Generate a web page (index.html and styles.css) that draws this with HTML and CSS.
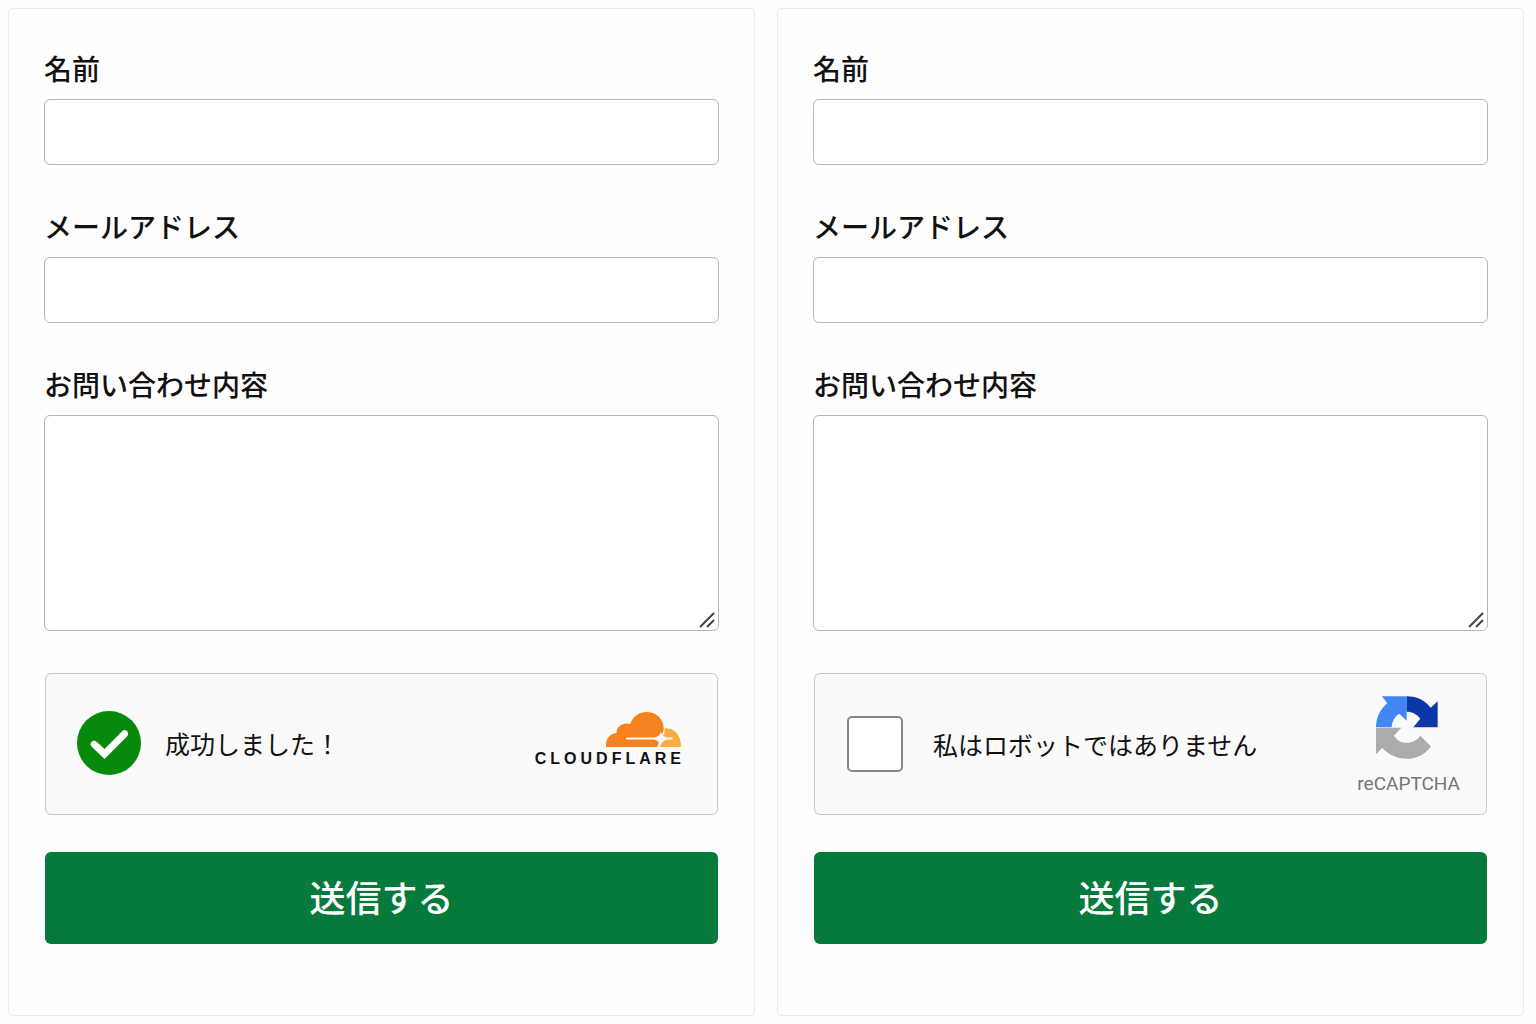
FILE: index.html
```html
<!DOCTYPE html>
<html lang="ja">
<head>
  <meta charset="UTF-8">
  <meta name="viewport" content="width=device-width, initial-scale=1">
  <title>お問い合わせ</title>
  <link rel="stylesheet" href="styles.css">
</head>
<body>

  <main class="page">
    <form class="card">
      <label for="name1">名前</label>
      <input class="field" type="text" id="name1">
      <label for="email1">メールアドレス</label>
      <input class="field" type="email" id="email1">
      <label for="message1">お問い合わせ内容</label>
      <div class="area">
        <textarea class="field" id="message1"></textarea>
        <svg class="grip" viewBox="0 0 16 16"><path d="M1 15L15 1M8 15L15 8"/></svg>
      </div>

      <!-- Turnstile -->
      <div class="captcha turnstile">
        <svg class="check" viewBox="0 0 64 64">
          <circle cx="32" cy="32" r="32" fill="#078a0b"/>
          <path d="M13.500 33.500Q13.500 30.500 17 29.500Q19 29.500 27.500 38L45 20.500Q47 18 50 20Q52.500 23 49.500 26L27.500 48L14.500 35.500Z" fill="#fff"/>
        </svg>
        <span class="captcha-text">成功しました！</span>
        <div class="cloudflare">
          <svg class="cloud" viewBox="258 36 222 103">
            <path fill="#f6821f" d="M258 139C257 116 267 101 289 98C289 77 309 65 330 71C338 49 355 36 378 36C407 36 429 58 429 84C429 93 425 101 420 107L410 139Z"/>
            <path fill="#fbad41" d="M432 84C462 82 481 106 480 139H415L422 112L431 98Z"/>
            <path fill="#fafafa" d="M319 111H398Q416 110 421 95Q425 109 438 111H454Q458 114 454 117H438Q428 119 423 128L417 139H411L415 127Q412 119 398 117H319Q314 114 319 111Z"/>
          </svg>
          <span class="cloudflare-name">CLOUDFLARE</span>
        </div>
      </div>

      <button type="submit">送信する</button>
    </form>

    <form class="card">
      <label for="name2">名前</label>
      <input class="field" type="text" id="name2">
      <label for="email2">メールアドレス</label>
      <input class="field" type="email" id="email2">
      <label for="message2">お問い合わせ内容</label>
      <div class="area">
        <textarea class="field" id="message2"></textarea>
        <svg class="grip" viewBox="0 0 16 16"><path d="M1 15L15 1M8 15L15 8"/></svg>
      </div>

      <!-- reCAPTCHA -->
      <div class="captcha recaptcha">
        <input class="robot" type="checkbox" id="robot">
        <label class="captcha-text" for="robot">私はロボットではありません</label>
        <div class="recaptcha-brand">
          <svg class="arrows" viewBox="106 33 186 188">
            <path fill="#4285f4" d="M124 33H198V107L176 86C162 94 154 110 153 126H106C106 97 118 73 140 54Z"/>
            <path fill="#0b37a8" d="M198 33C230 33 254 46 270 68L291 48V126H218L239 101C230 88 215 80 198 80Z"/>
            <path fill="#ababab" d="M106 128H182L160 152C170 168 183 173 198 173C217 173 230 165 239 152L271 184C253 208 228 221 198 221C168 221 142 208 125 188L106 207Z"/>
          </svg>
          <span class="recaptcha-name">reCAPTCHA</span>
        </div>
      </div>

      <button type="submit">送信する</button>
    </form>
  </main>

</body>
</html>
```
FILE: styles.css
```css
* { box-sizing: border-box; }
body { margin: 0; background: #fefefe; color: #111; font-family: "Noto Sans CJK JP", sans-serif; }

.page { display: grid; grid-template-columns: 1fr 1fr; gap: 22px; min-height: 100vh; padding: 8px 12px 8px 8px; }
.card { padding: 40px 35px; border: 1px solid #ebebeb; border-radius: 5px; }

label { display: block; margin-bottom: 12px; font-size: 28px; font-weight: 500; line-height: 38px; }
.field { display: block; width: 100%; height: 66px; margin: 0 0 42px; padding: 10px 16px; border: 1px solid #b5b5b5; border-radius: 6px; background: #fff; font: inherit; font-size: 24px; }

.area { position: relative; margin-bottom: 42px; }
.area .field { height: 216px; margin: 0; resize: vertical; }
.area .field::-webkit-resizer { display: none; }
.grip { position: absolute; right: 4px; bottom: 3px; width: 16px; height: 16px; stroke: #444; stroke-width: 2; pointer-events: none; }

.captcha { display: flex; align-items: center; height: 142px; margin: 0 1px 37px; border: 1px solid #c8c8c8; border-radius: 6px; background: #fafafa; }
.captcha-text { margin: 0; font-size: 25px; font-weight: 400; line-height: 40px; }

.turnstile { padding: 0 36px 3px 31px; }
.check { width: 64px; height: 64px; margin-right: 24px; }
.cloudflare { display: flex; flex-direction: column; align-items: flex-end; margin-left: auto; padding-bottom: 4px; }
.cloud { width: 75px; height: 35px; }
.cloudflare-name { margin-top: 2px; margin-right: -4px; font: bold 16px/20px "Liberation Sans", sans-serif; letter-spacing: 4px; }

.recaptcha { padding: 0 26px 0 32px; }
.robot { appearance: none; width: 56px; height: 56px; margin: 0 30px 0 0; border: 2px solid #888; border-radius: 5px; background: #fff; cursor: pointer; }
.robot:checked { background: #078a0b; }
.recaptcha-brand { display: flex; flex-direction: column; align-items: center; margin-left: auto; padding-top: 3px; }
.arrows { width: 62px; height: 63px; margin-right: 4px; }
.recaptcha-name { margin-top: 13px; color: #757575; font: 19px/24px Roboto, sans-serif; }

button { display: block; width: calc(100% - 2px); height: 92px; margin: 0 1px; padding: 0 0 4px; border: none; border-radius: 6px; background: #057a3c; color: #fff; font: inherit; font-size: 36px; font-weight: 500; cursor: pointer; }
button:hover { background: #046832; }
```
